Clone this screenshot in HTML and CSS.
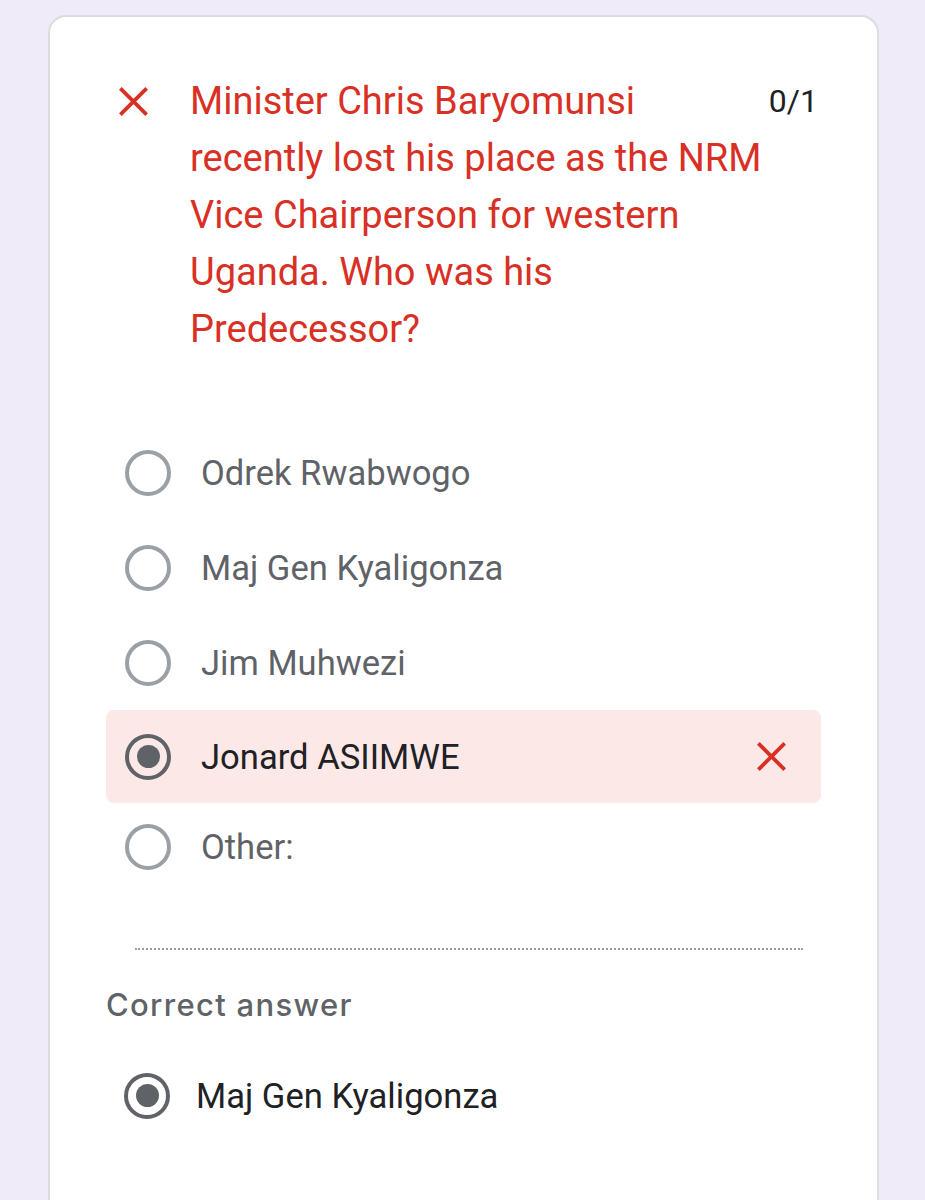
FILE: index.html
```html
<!DOCTYPE html>
<html lang="en">
<head>
  <meta charset="UTF-8">
  <meta name="viewport" content="width=device-width, initial-scale=1.0">
  <title>Quiz result</title>
  <link rel="stylesheet" href="styles.css">
</head>
<body>
  <div class="card">
    <div class="question">
      <svg class="x-icon" viewBox="0 0 24 24"><path d="M3 3 L21 21 M21 3 L3 21"/></svg>
      <p class="question-text">Minister Chris Baryomunsi<br>recently lost his place as the NRM Vice Chairperson for western Uganda. Who was his Predecessor?</p>
      <span class="score">0/1</span>
    </div>

    <div class="options">
      <div class="option">
        <span class="radio"></span>
        <span class="label">Odrek Rwabwogo</span>
      </div>
      <div class="option">
        <span class="radio"></span>
        <span class="label">Maj Gen Kyaligonza</span>
      </div>
      <div class="option">
        <span class="radio"></span>
        <span class="label">Jim Muhwezi</span>
      </div>
      <div class="option wrong">
        <span class="radio checked"></span>
        <span class="label">Jonard ASIIMWE</span>
        <svg class="x-icon small" viewBox="0 0 24 24"><path d="M3 3 L21 21 M21 3 L3 21"/></svg>
      </div>
      <div class="option other">
        <span class="radio"></span>
        <span class="label">Other:</span>
      </div>
    </div>

    <div class="divider"></div>

    <h3 class="answer-title">Correct answer</h3>
    <div class="option correct">
      <span class="radio checked"></span>
      <span class="label">Maj Gen Kyaligonza</span>
    </div>
  </div>
</body>
</html>
```

FILE: styles.css
```css
body {
  margin: 0;
  padding: 0;
  background-color: #efebf8;
  font-family: Roboto, 'Noto Sans', sans-serif;
}

.card {
  margin: 15px 46px 0 48px;
  background-color: #fff;
  border: 2px solid #dadce0;
  border-bottom: none;
  border-radius: 18px 18px 0 0;
  padding: 56px 56px 60px;
}

.question {
  display: flex;
  align-items: flex-start;
}

.x-icon {
  width: 35px;
  height: 35px;
  flex: none;
  margin: 11px 39px 0 10px;
}

.x-icon path {
  stroke: #d93025;
  stroke-width: 2.6;
  fill: none;
}

.question-text {
  flex: 1;
  margin: 0;
  color: #d93025;
  font-size: 38px;
  line-height: 57px;
}

.score {
  flex: none;
  margin: 0 3px 0 4px;
  color: #202124;
  font-size: 32px;
  line-height: 57px;
}

.options {
  margin-top: 67px;
}

.option {
  display: flex;
  align-items: center;
  height: 95px;
  padding: 0 19px;
  border-radius: 8px;
}

.option.wrong {
  height: 93px;
  background-color: #fce8e6;
}

.option.other {
  height: 88px;
}

.radio {
  width: 38px;
  height: 38px;
  flex: none;
  border: 4px solid #9aa0a6;
  border-radius: 50%;
  margin-right: 30px;
  display: flex;
  align-items: center;
  justify-content: center;
}

.radio.checked {
  border-color: #5f6368;
}

.radio.checked::after {
  content: '';
  width: 23px;
  height: 23px;
  border-radius: 50%;
  background-color: #5f6368;
}

.label {
  flex: 1;
  font-size: 34.6px;
  color: #5f6368;
}

.option.wrong .label,
.option.correct .label {
  color: #202124;
}

.x-icon.small {
  margin: 0 13px 0 0;
}

.divider {
  margin: 57px 18px 0 29px;
  border-top: 2px dotted #9aa0a6;
}

.answer-title {
  margin: 36px 0 0;
  font-family: Inter, Roboto, sans-serif;
  font-weight: 500;
  font-size: 31px;
  letter-spacing: 1.3px;
  color: #5f6368;
}

.option.correct {
  margin-top: 25px;
  padding-left: 18px;
}

.option.correct .radio {
  margin-right: 26px;
}
```
